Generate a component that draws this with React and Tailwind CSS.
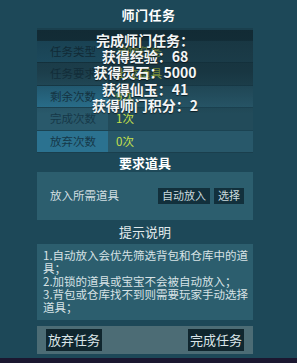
import React from 'react';

const ROWS = [
  { label: '任务类型', value: '寻物任务', light: true },
  { label: '任务要求', value: '上交道具', light: false },
  { label: '剩余次数', value: '9次', light: true },
  { label: '完成次数', value: '1次', light: false },
  { label: '放弃次数', value: '0次', light: true },
];

const REWARDS = ['完成师门任务：', '获得经验：68', '获得灵石：5000', '获得仙玉：41', '获得师门积分：2'];

const font = { fontFamily: '"Noto Sans CJK SC", "Noto Sans", sans-serif' };

export default function App() {
  return (
    <div
      className="w-[297px] h-[363px] bg-[#1d4858] flex flex-col overflow-hidden relative"
      style={font}
    >
      {/* Title */}
      <div className="h-[28px] flex items-center justify-center pt-[2px]">
        <h1 className="text-[13px] font-bold text-white tracking-[0.5px]">师门任务</h1>
      </div>

      <div className="ml-[37px] w-[216px] flex flex-col">
        {/* Info table */}
        <div className="relative">
          <div className="h-[12px] bg-[#1a3f4d]" />
          <div className="flex flex-col border-b border-[#1a3f4d]">
            {ROWS.map((row) => (
              <div key={row.label} className="flex h-[22.4px] border-t border-[#1b4352]">
                <div
                  className={`w-[71px] flex items-center pl-[13px] text-[11.5px] text-[#163848] ${
                    row.light ? 'bg-[#2b7290]' : 'bg-[#29596b]'
                  }`}
                >
                  {row.label}
                </div>
                <div
                  className={`flex-1 flex items-center pl-[8px] text-[11.5px] text-[#c6e04a] ${
                    row.light ? 'bg-[#28586a]' : 'bg-[#224b5a]'
                  }`}
                >
                  {row.value}
                </div>
              </div>
            ))}
          </div>

          {/* Reward toast */}
          <div className="absolute left-0 right-0 top-[2px] h-[84px] bg-gradient-to-b from-[#0c1d24]/60 via-[#0c1d24]/45 to-[#0c1d24]/0 flex flex-col items-center justify-start pt-[2px]">
            {REWARDS.map((line) => (
              <div
                key={line}
                className="text-[14px] leading-[16.2px] font-bold text-[#f4f6f6] [text-shadow:0_1px_1px_rgba(0,0,0,0.6)]"
              >
                {line}
              </div>
            ))}
          </div>
        </div>

        {/* Required items */}
        <div className="h-[19px] flex items-center justify-center">
          <span className="text-[13px] font-bold text-white">要求道具</span>
        </div>
        <div className="h-[48px] bg-[#2c5e6e] flex items-center justify-between pl-[13px] pr-[9px]">
          <span className="text-[11.5px] text-[#d2dfe2]">放入所需道具</span>
          <div className="flex gap-[4px]">
            <button className="h-[16px] px-[4px] bg-[#12303c] text-[11px] leading-none text-[#cbdade]">自动放入</button>
            <button className="h-[16px] px-[4px] bg-[#12303c] text-[11px] leading-none text-[#cbdade]">选择</button>
          </div>
        </div>

        {/* Hints */}
        <div className="h-[24px] flex items-center justify-center">
          <span className="text-[13px] text-[#e2eaec]">提示说明</span>
        </div>
        <div className="h-[76px] bg-[#2c5e6e] pl-[6px] pr-[2px] pt-[5px] text-[11.5px] leading-[13px] text-[#d8e3e6]">
          <p>1.自动放入会优先筛选背包和仓库中的道具；</p>
          <p>2.加锁的道具或宝宝不会被自动放入；</p>
          <p>3.背包或仓库找不到则需要玩家手动选择道具；</p>
        </div>

        {/* Actions */}
        <div className="mt-[6px] h-[28px] bg-[#4c6c75] flex items-center justify-between px-[9px]">
          <button className="h-[22px] w-[56px] bg-[#10262e] text-[13px] text-[#dae5e8]">放弃任务</button>
          <button className="h-[22px] w-[56px] bg-[#10262e] text-[13px] text-[#dae5e8]">完成任务</button>
        </div>
      </div>

      <div className="mt-auto h-[5px] bg-[#1b1730]" />
    </div>
  );
}
